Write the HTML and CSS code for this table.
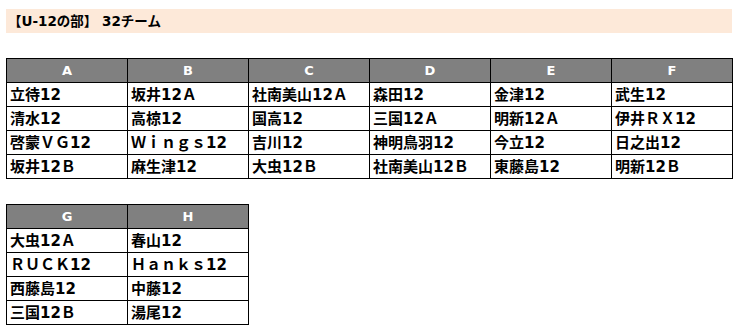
FILE: index.html
```html
<!DOCTYPE html>
<html lang="ja">
<head>
<meta charset="utf-8">
<title>U-12の部</title>
<link rel="stylesheet" href="styles.css">
</head>
<body>
<div class="page">
  <div class="title">【U-12の部】 32チーム</div>
  <table class="grid six">
    <thead>
      <tr><th>A</th><th>B</th><th>C</th><th>D</th><th>E</th><th>F</th></tr>
    </thead>
    <tbody>
      <tr><td>立待12</td><td>坂井12Ａ</td><td>社南美山12Ａ</td><td>森田12</td><td>金津12</td><td>武生12</td></tr>
      <tr><td>清水12</td><td>高椋12</td><td>国高12</td><td>三国12Ａ</td><td>明新12Ａ</td><td>伊井ＲＸ12</td></tr>
      <tr><td>啓蒙ＶＧ12</td><td>Ｗｉｎｇｓ12</td><td>吉川12</td><td>神明鳥羽12</td><td>今立12</td><td>日之出12</td></tr>
      <tr><td>坂井12Ｂ</td><td>麻生津12</td><td>大虫12Ｂ</td><td>社南美山12Ｂ</td><td>東藤島12</td><td>明新12Ｂ</td></tr>
    </tbody>
  </table>
  <table class="grid two">
    <thead>
      <tr><th>G</th><th>H</th></tr>
    </thead>
    <tbody>
      <tr><td>大虫12Ａ</td><td>春山12</td></tr>
      <tr><td>ＲＵＣＫ12</td><td>Ｈａｎｋｓ12</td></tr>
      <tr><td>西藤島12</td><td>中藤12</td></tr>
      <tr><td>三国12Ｂ</td><td>湯尾12</td></tr>
    </tbody>
  </table>
</div>
</body>
</html>
```
FILE: styles.css
```css
html, body {
  margin: 0;
  padding: 0;
  background: #ffffff;
}
.page {
  padding: 9px 8px 0 6px;
  display: flex;
  flex-direction: column;
  align-items: flex-start;
  font-family: "DejaVu Sans", "Noto Sans CJK JP", sans-serif;
  color: #000000;
}
.title {
  width: 724px;
  height: 24px;
  line-height: 24px;
  padding-left: 2px;
  background: #fde9d9;
  font-size: 13.5px;
  font-weight: bold;
}
.grid {
  border-collapse: collapse;
  table-layout: fixed;
}
.six {
  margin-top: 25px;
  width: 727px;
}
.two {
  margin-top: 25px;
  width: 243px;
}
.grid th,
.grid td {
  border: 1px solid #000000;
  height: 24px;
  padding: 0;
  box-sizing: border-box;
  white-space: nowrap;
  overflow: hidden;
}
.grid th {
  background: #808080;
  color: #ffffff;
  font-size: 13px;
  font-weight: bold;
  text-align: center;
}
.grid td {
  font-size: 15px;
  font-weight: bold;
  padding-left: 3px;
  padding-top: 1px;
  text-align: left;
  line-height: 22px;
}
```
